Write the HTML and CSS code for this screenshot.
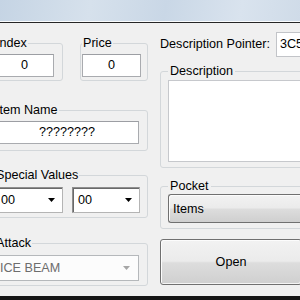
FILE: index.html
```html
<!DOCTYPE html>
<html lang="en">
<head>
    <meta charset="UTF-8">
    <meta name="viewport" content="width=device-width, initial-scale=1.0">
    <title>Item Editor</title>
    <link rel="stylesheet" href="styles.css">
</head>
<body>
    <div class="window">
        <div class="titlebar"></div>
        <div class="client">
            <div class="col-left">
                <div class="row-pair">
                    <fieldset class="group group-index">
                        <legend>Index</legend>
                        <div class="textbox centered">0</div>
                    </fieldset>
                    <fieldset class="group group-price">
                        <legend>Price</legend>
                        <div class="textbox centered">0</div>
                    </fieldset>
                </div>
                <fieldset class="group group-name">
                    <legend>Item Name</legend>
                    <div class="textbox centered">????????</div>
                </fieldset>
                <fieldset class="group group-special">
                    <legend>Special Values</legend>
                    <div class="combo-row">
                        <div class="combo">
                            <span>00</span>
                            <svg class="arrow" width="7" height="4" viewBox="0 0 7 4"><path d="M0 0h7L3.5 4z"/></svg>
                        </div>
                        <div class="combo">
                            <span>00</span>
                            <svg class="arrow" width="7" height="4" viewBox="0 0 7 4"><path d="M0 0h7L3.5 4z"/></svg>
                        </div>
                    </div>
                </fieldset>
                <fieldset class="group group-attack">
                    <legend>Attack</legend>
                    <div class="combo combo-disabled">
                        <span>ICE BEAM</span>
                        <svg class="arrow" width="7" height="4" viewBox="0 0 7 4"><path d="M0 0h7L3.5 4z"/></svg>
                    </div>
                </fieldset>
            </div>
            <div class="col-right">
                <div class="pointer-row">
                    <span class="pointer-label">Description Pointer:</span>
                    <div class="textbox pointer-box">3C5</div>
                </div>
                <fieldset class="group group-desc">
                    <legend>Description</legend>
                    <div class="textarea"></div>
                </fieldset>
                <fieldset class="group group-pocket">
                    <legend>Pocket</legend>
                    <div class="dropdown">Items</div>
                </fieldset>
                <button type="button" class="btn-open">Open</button>
            </div>
        </div>
        <div class="bottom-edge"></div>
    </div>
</body>
</html>
```

FILE: styles.css
```css
body {
    margin: 0;
    width: 300px;
    height: 300px;
    overflow: hidden;
    background-color: #f0f0f0;
    font-family: "Liberation Sans", Arial, sans-serif;
    font-size: 12.6px;
    line-height: 15px;
    color: #000;
}

.window {
    display: flex;
    flex-direction: column;
    height: 300px;
}

.titlebar {
    height: 21px;
    flex-shrink: 0;
    background: linear-gradient(100deg, #c5d4e4 0%, #d6e1ec 30%, #c9d7e6 55%, #d9e3ee 80%, #cfdbe8 100%);
    border-bottom: 1px solid #fafcfd;
    box-shadow: 0 1px 0 #262626;
    margin-bottom: 1px;
}

.client {
    flex: 1;
    display: flex;
    gap: 12px;
    margin-left: -7px;
}

.bottom-edge {
    height: 4px;
    flex-shrink: 0;
    background-color: #151515;
}

/* group boxes */
.group {
    margin: 0;
    min-width: 0;
    border: 1px solid #d3d7da;
    border-radius: 3px;
    box-sizing: border-box;
}

.group legend {
    padding: 0 1px;
    line-height: 15px;
}

.col-left {
    width: 155px;
    flex-shrink: 0;
}

.row-pair {
    display: flex;
    gap: 17px;
    margin-top: 13px;
}

.group-index {
    width: 70px;
    padding: 3px 8px 3px 1px;
}

.group-price {
    width: 68px;
    padding: 3px 6px 3px 1px;
}

.group-name {
    margin-top: 22px;
    padding: 3px 8px 6px 1px;
}

.group-special {
    margin-top: 17px;
    padding: 4px 7px 4px 1px;
}

.group-attack {
    margin-top: 18px;
    padding: 4px 8px 4px 1px;
}

/* controls */
.textbox {
    height: 23px;
    box-sizing: border-box;
    background-color: #fff;
    border: 1px solid #a9abaf;
    border-top-color: #9c9ea3;
    padding: 0 3px;
    line-height: 21px;
    white-space: nowrap;
}

.centered {
    text-align: center;
}

.combo-row {
    display: flex;
    gap: 9px;
}

.combo {
    height: 26px;
    width: 68px;
    box-sizing: border-box;
    display: flex;
    align-items: center;
    justify-content: space-between;
    padding: 0 7px 0 5px;
    background-color: #fff;
    border: 1px solid #8e8e8e;
    border-right-color: #b4b4b4;
    border-bottom-color: #b4b4b4;
    box-shadow: inset 1px 1px 0 #696969;
}

.combo .arrow {
    fill: #000;
}

.combo-disabled {
    width: 100%;
    padding: 0 8px 0 4px;
    color: #6d6d6d;
    background-color: #fcfcfc;
    border: 1px solid #b5b8bb;
    box-shadow: none;
}

.combo-disabled .arrow {
    fill: #a6a6a6;
}

.col-right {
    width: 152px;
    flex-shrink: 0;
}

.pointer-row {
    display: flex;
    align-items: center;
    justify-content: space-between;
    margin-top: 9px;
    height: 25px;
}

.pointer-box {
    width: 36px;
    height: 25px;
    line-height: 23px;
    border-color: #c2c4c8;
    padding-left: 3px;
}

.group-desc {
    margin-top: 7px;
    padding: 1px 0 5px 7px;
}

.group-desc legend {
    padding: 0 2px;
}

.textarea {
    height: 82px;
    box-sizing: border-box;
    background-color: #fff;
    border: 1px solid #c6c8cc;
}

.group-pocket {
    margin-top: 11px;
    padding: 0 0 5px 7px;
}

.group-pocket legend {
    padding: 0 2px;
}

.dropdown {
    height: 29px;
    box-sizing: border-box;
    padding: 0 4px;
    line-height: 28px;
    border: 1px solid #707070;
    border-right: none;
    border-radius: 3px 0 0 3px;
    background: linear-gradient(#f2f2f2 0%, #ebebeb 48%, #dddddd 52%, #cfcfcf 100%);
    box-shadow: inset 1px 1px 0 #fcfcfc;
}

.btn-open {
    display: block;
    margin-top: 10px;
    width: 142px;
    height: 46px;
    padding: 0;
    font-family: inherit;
    font-size: inherit;
    color: #000;
    border: 1px solid #707070;
    border-radius: 3px;
    background: linear-gradient(#f2f2f2 0%, #ebebeb 48%, #dddddd 52%, #cfcfcf 100%);
    box-shadow: inset 1px 1px 0 #fcfcfc, inset -1px -1px 0 #f4f4f4;
}
```
